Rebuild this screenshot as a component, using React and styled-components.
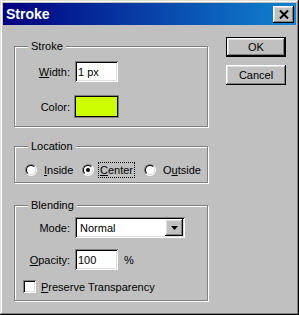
import React from 'react';
import styled, { createGlobalStyle, css } from 'styled-components';

const GlobalStyle = createGlobalStyle`
  html, body {
    margin: 0;
    padding: 0;
    background: #c0c0c0;
  }
  body {
    font-family: 'Liberation Sans', Arial, sans-serif;
    font-size: 11px;
    color: #000;
  }
`;

const sunken = css`
  background: #fff;
  box-shadow: inset 1px 1px 0 #808080, inset -1px -1px 0 #fff,
    inset 2px 2px 0 #000, inset -2px -2px 0 #dfdfdf;
`;

const raised = css`
  background: #c0c0c0;
  box-shadow: inset -1px -1px 0 #000, inset 1px 1px 0 #fff,
    inset -2px -2px 0 #808080, inset 2px 2px 0 #dfdfdf;
`;

const Window = styled.div`
  width: 299px;
  height: 315px;
  box-sizing: border-box;
  padding: 3px;
  background: #c0c0c0;
  box-shadow: inset -1px -1px 0 #000, inset 1px 1px 0 #dfdfdf,
    inset -2px -2px 0 #808080, inset 2px 2px 0 #fff;
  display: flex;
  flex-direction: column;
`;

const TitleBar = styled.div`
  height: 22px;
  display: flex;
  align-items: center;
  justify-content: space-between;
  padding: 0 2px 0 3px;
  background: linear-gradient(90deg, #000080 0%, #1084d0 100%);
  color: #fff;
  font-weight: bold;
  font-size: 14px;
`;

const CloseButton = styled.div`
  ${raised};
  width: 21px;
  height: 17px;
  display: flex;
  align-items: center;
  justify-content: center;
`;

const Body = styled.div`
  display: flex;
  align-items: flex-start;
  padding-left: 11px;
`;

const Column = styled.div`
  width: 194px;
  margin-top: 21px;
  display: flex;
  flex-direction: column;
`;

const Group = styled.div`
  position: relative;
  border: 1px solid #808080;
  box-shadow: inset 1px 1px 0 #fff, 1px 1px 0 #fff;
  margin-top: ${p => p.$gap || 0}px;
  padding: ${p => p.$pad};
  display: flex;
  flex-direction: column;
`;

const GroupLabel = styled.span`
  position: absolute;
  top: -7px;
  left: 13px;
  padding: 0 3px;
  background: #c0c0c0;
  line-height: 13px;
`;

const Row = styled.div`
  display: flex;
  align-items: center;
  height: ${p => p.$h || 21}px;
  margin-top: ${p => p.$mt || 0}px;
  padding-left: ${p => p.$indent || 0}px;
`;

const Label = styled.span`
  width: 55px;
  margin-right: 5px;
  text-align: right;
`;

const TextField = styled.div`
  ${sunken};
  width: 43px;
  height: 21px;
  box-sizing: border-box;
  padding: 0 3px;
  display: flex;
  align-items: center;
`;

const Swatch = styled.div`
  width: 43px;
  height: 21px;
  box-sizing: border-box;
  background: ${p => p.$color};
  border: 1px solid #000;
  outline: 1px solid #808080;
`;

const Select = styled.div`
  ${sunken};
  width: 110px;
  height: 21px;
  box-sizing: border-box;
  padding: 2px;
  display: flex;
  align-items: center;
`;

const SelectValue = styled.span`
  flex: 1;
  padding-left: 3px;
`;

const DropButton = styled.div`
  ${raised};
  width: 18px;
  height: 17px;
  display: flex;
  align-items: center;
  justify-content: center;
`;

const Unit = styled.span`
  margin-left: 6px;
`;

const RadioRow = styled.div`
  display: grid;
  grid-template-columns: 57px 62px auto;
  align-items: center;
  height: 16px;
  padding-left: 10px;
`;

const RadioItem = styled.div`
  display: flex;
  align-items: center;
`;

const RadioCircle = styled.span`
  width: 12px;
  height: 12px;
  box-sizing: border-box;
  border-radius: 50%;
  border: 1px solid;
  border-color: #808080 #fff #fff #808080;
  display: flex;
  margin-right: ${p => (p.$focus ? 4 : 5)}px;
`;

const RadioInner = styled.span`
  flex: 1;
  border-radius: 50%;
  border: 1px solid;
  border-color: #000 #dfdfdf #dfdfdf #000;
  background: #fff;
  display: flex;
  align-items: center;
  justify-content: center;
`;

const Dot = styled.span`
  width: 4px;
  height: 4px;
  border-radius: 50%;
  background: #000;
`;

const RadioText = styled.span`
  padding: 0 1px;
  line-height: 14px;
  border: 1px dotted ${p => (p.$focus ? '#000' : 'transparent')};
`;

const CheckBox = styled.span`
  ${sunken};
  width: 13px;
  height: 13px;
  margin-right: 5px;
`;

const Buttons = styled.div`
  margin-left: 18px;
  margin-top: 12px;
  display: flex;
  flex-direction: column;
  gap: 8px;
`;

const Button = styled.div`
  width: 60px;
  height: 20px;
  box-sizing: border-box;
  display: flex;
  align-items: center;
  justify-content: center;
  ${raised};
  ${p =>
    p.$default &&
    css`
      border: 1px solid #000;
    `}
`;

function Radio({ label, checked, focus }) {
  return (
    <RadioItem>
      <RadioCircle $focus={focus}>
        <RadioInner>{checked && <Dot />}</RadioInner>
      </RadioCircle>
      <RadioText $focus={focus}>{label}</RadioText>
    </RadioItem>
  );
}

export default function App() {
  return (
    <>
      <GlobalStyle />
      <Window>
        <TitleBar>
          <span>Stroke</span>
          <CloseButton>
            <svg width="10" height="9" viewBox="0 0 10 9">
              <path d="M1 0.5 L9 8.5 M9 0.5 L1 8.5" stroke="#000" strokeWidth="2" fill="none" />
            </svg>
          </CloseButton>
        </TitleBar>
        <Body>
          <Column>
            <Group $pad="14px 0 9px">
              <GroupLabel>Stroke</GroupLabel>
              <Row>
                <Label>
                  <u>W</u>idth:
                </Label>
                <TextField>1 px</TextField>
              </Row>
              <Row $mt={14}>
                <Label>Color:</Label>
                <Swatch $color="#ccff00" />
              </Row>
            </Group>

            <Group $gap={19} $pad="15px 0 4px">
              <GroupLabel>Location</GroupLabel>
              <RadioRow>
                <Radio label={<><u>I</u>nside</>} />
                <Radio label={<><u>C</u>enter</>} checked focus />
                <Radio label={<>O<u>u</u>tside</>} />
              </RadioRow>
            </Group>

            <Group $gap={22} $pad="11px 0 7px">
              <GroupLabel>Blending</GroupLabel>
              <Row>
                <Label>Mode:</Label>
                <Select>
                  <SelectValue>Normal</SelectValue>
                  <DropButton>
                    <svg width="7" height="4" viewBox="0 0 7 4">
                      <path d="M0 0 H7 L3.5 4 Z" fill="#000" />
                    </svg>
                  </DropButton>
                </Select>
              </Row>
              <Row $mt={11}>
                <Label>
                  <u>O</u>pacity:
                </Label>
                <TextField>100</TextField>
                <Unit>%</Unit>
              </Row>
              <Row $mt={10} $h={13} $indent={8}>
                <CheckBox />
                <span>
                  <u>P</u>reserve Transparency
                </span>
              </Row>
            </Group>
          </Column>
          <Buttons>
            <Button $default>OK</Button>
            <Button>Cancel</Button>
          </Buttons>
        </Body>
      </Window>
    </>
  );
}
